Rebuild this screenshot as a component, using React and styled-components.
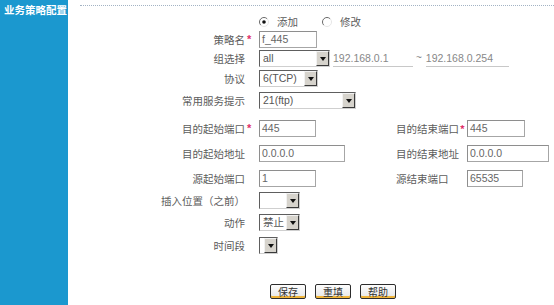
import React from 'react';
import styled, { createGlobalStyle } from 'styled-components';

const GlobalStyle = createGlobalStyle`
  html, body {
    margin: 0;
    padding: 0;
    background: #fff;
  }
  body {
    font-family: "Liberation Sans", "Noto Sans CJK SC", sans-serif;
    font-size: 10px;
    color: #555;
  }
`;

const Page = styled.div`
  display: flex;
  width: 554px;
  height: 305px;
  overflow: hidden;
`;

const Sidebar = styled.aside`
  width: 68px;
  flex-shrink: 0;
  background: #1b98cf;
`;

const SideTitle = styled.div`
  padding: 3px 0 0 4px;
  color: #fff;
  font-weight: bold;
  font-size: 10.5px;
  line-height: 14px;
  white-space: nowrap;
  font-family: "Noto Sans CJK SC", sans-serif;
`;

const Main = styled.main`
  flex: 1;
  padding-top: 5px;
`;

const Dotted = styled.div`
  margin-left: 12px;
  border-top: 1px dotted #a3b3c4;
`;

const Form = styled.div`
  padding-top: 6px;
`;

const Row = styled.div`
  display: flex;
  align-items: flex-start;
  height: ${p => p.$h}px;
`;

const Label = styled.div`
  width: 177px;
  text-align: right;
  line-height: 17px;
  font-size: 10.5px;
  color: #5c5c5c;
  white-space: nowrap;
  font-family: "Noto Sans CJK SC", sans-serif;
`;

const Star = styled.span`
  width: 14px;
  padding-left: 2px;
  box-sizing: border-box;
  line-height: 17px;
  color: #e0306a;
  font-size: 11px;
  font-weight: bold;
  visibility: ${p => (p.$show ? 'visible' : 'hidden')};
`;

const Field = styled.div`
  display: flex;
  align-items: flex-start;
  width: ${p => (p.$w ? `${p.$w}px` : 'auto')};
`;

const RightLabel = styled.div`
  display: flex;
  justify-content: space-between;
  width: 71px;
  line-height: 17px;
  font-size: 10.5px;
  color: #5c5c5c;
  white-space: nowrap;
  font-family: "Noto Sans CJK SC", sans-serif;
  span {
    color: #e0306a;
    font-weight: bold;
    padding-right: 2px;
  }
`;

const Input = styled.div`
  width: ${p => p.$w}px;
  height: 17px;
  box-sizing: border-box;
  border: 1px solid #a6a6a6;
  border-top-color: #8e8e8e;
  border-left-color: #8e8e8e;
  padding-left: 2px;
  line-height: 15px;
  font-size: 10.5px;
  color: #666;
  background: #fff;
`;

const SelectBox = styled.div`
  display: flex;
  width: ${p => p.$w}px;
  height: 17px;
  box-sizing: border-box;
  border: 1px solid;
  border-color: #5e5e5e #cfcfcf #cfcfcf #5e5e5e;
  background: #fff;
`;

const SelectText = styled.span`
  flex: 1;
  padding-left: 3px;
  line-height: 15px;
  font-size: 10.5px;
  color: #555;
  overflow: hidden;
  white-space: nowrap;
`;

const SelectArrow = styled.span`
  display: flex;
  align-items: center;
  justify-content: center;
  width: 13px;
  box-sizing: border-box;
  border: 1px solid;
  border-color: #f2f2f2 #3a3a3a #3a3a3a #f2f2f2;
  background: #d6d3cc;
  &::after {
    content: '';
    border-left: 3px solid transparent;
    border-right: 3px solid transparent;
    border-top: 4px solid #111;
  }
`;

const IpText = styled.span`
  display: inline-block;
  width: ${p => p.$w}px;
  margin-left: ${p => p.$ml}px;
  border-bottom: 1px solid #c8c8c8;
  line-height: 16px;
  font-size: 10.5px;
  color: #888;
`;

const Tilde = styled.span`
  margin-left: 3px;
  line-height: 16px;
  color: #888;
`;

const RadioRow = styled.div`
  display: flex;
  align-items: center;
  height: 19px;
  padding-left: 191px;
`;

const RadioItem = styled.label`
  display: flex;
  align-items: center;
  gap: 8px;
  width: 63px;
  font-size: 10.5px;
  color: #5c5c5c;
  font-family: "Noto Sans CJK SC", sans-serif;
`;

const Actions = styled.div`
  display: flex;
  gap: 9px;
  padding: 30px 0 0 202px;
`;

const Btn = styled.button`
  width: 36px;
  height: 15px;
  padding: 0;
  border: 1px solid #2c2c2c;
  border-radius: 2px;
  background: linear-gradient(#fdfdfd, #e6e6e6);
  box-shadow: inset 0 -2px 0 #f0b53a;
  color: #333;
  font-size: 10px;
  line-height: 12px;
  font-family: "Noto Sans CJK SC", sans-serif;
`;

const Radio = ({ checked }) => (
  <svg width="10" height="10" viewBox="0 0 10 10">
    <circle cx="5" cy="5" r="4.5" fill="#fff" />
    <path d="M8.2 1.8 A4.5 4.5 0 0 0 1.8 8.2" fill="none" stroke="#6a6a6a" strokeWidth="1" />
    <path d="M1.8 8.2 A4.5 4.5 0 0 0 8.2 1.8" fill="none" stroke="#e6e6e6" strokeWidth="1" />
    {checked && <circle cx="5" cy="5" r="1.8" fill="#111" />}
  </svg>
);

const Select = ({ w, value }) => (
  <SelectBox $w={w}>
    <SelectText>{value}</SelectText>
    <SelectArrow />
  </SelectBox>
);

export default function App() {
  return (
    <Page>
      <GlobalStyle />
      <Sidebar>
        <SideTitle>业务策略配置</SideTitle>
      </Sidebar>
      <Main>
        <Dotted />
        <Form>
          <RadioRow>
            <RadioItem><Radio checked />添加</RadioItem>
            <RadioItem><Radio />修改</RadioItem>
          </RadioRow>
          <Row $h={19}>
            <Label>策略名</Label>
            <Star $show>*</Star>
            <Input $w={58}>f_445</Input>
          </Row>
          <Row $h={20}>
            <Label>组选择</Label>
            <Star />
            <Select w={71} value="all" />
            <IpText $w={80} $ml={3}>192.168.0.1</IpText>
            <Tilde>~</Tilde>
            <IpText $w={83} $ml={4}>192.168.0.254</IpText>
          </Row>
          <Row $h={22}>
            <Label>协议</Label>
            <Star />
            <Select w={59} value="6(TCP)" />
          </Row>
          <Row $h={28}>
            <Label>常用服务提示</Label>
            <Star />
            <Select w={97} value="21(ftp)" />
          </Row>
          <Row $h={25}>
            <Label>目的起始端口</Label>
            <Star $show>*</Star>
            <Field $w={137}><Input $w={57}>445</Input></Field>
            <RightLabel>目的结束端口<span>*</span></RightLabel>
            <Input $w={58}>445</Input>
          </Row>
          <Row $h={25}>
            <Label>目的起始地址</Label>
            <Star />
            <Field $w={137}><Input $w={86}>0.0.0.0</Input></Field>
            <RightLabel>目的结束地址</RightLabel>
            <Input $w={82}>0.0.0.0</Input>
          </Row>
          <Row $h={22}>
            <Label>源起始端口</Label>
            <Star />
            <Field $w={137}><Input $w={57}>1</Input></Field>
            <RightLabel>源结束端口</RightLabel>
            <Input $w={56}>65535</Input>
          </Row>
          <Row $h={22}>
            <Label>插入位置（之前）</Label>
            <Star />
            <Select w={41} value="" />
          </Row>
          <Row $h={23}>
            <Label>动作</Label>
            <Star />
            <Select w={41} value="禁止" />
          </Row>
          <Row $h={17}>
            <Label>时间段</Label>
            <Star />
            <Select w={19} value="" />
          </Row>
        </Form>
        <Actions>
          <Btn type="button">保存</Btn>
          <Btn type="button">重填</Btn>
          <Btn type="button">帮助</Btn>
        </Actions>
      </Main>
    </Page>
  );
}
